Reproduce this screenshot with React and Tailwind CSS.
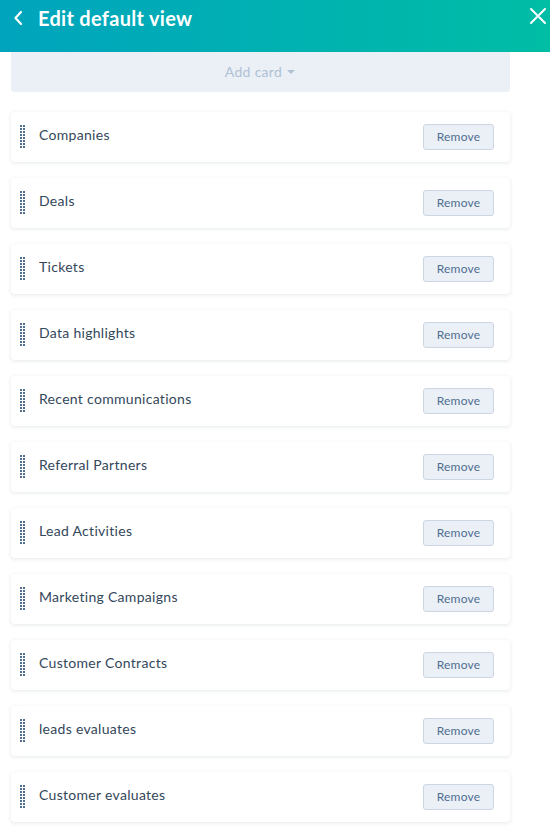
import React from "react";

const items = [
  "Companies",
  "Deals",
  "Tickets",
  "Data highlights",
  "Recent communications",
  "Referral Partners",
  "Lead Activities",
  "Marketing Campaigns",
  "Customer Contracts",
  "leads evaluates",
  "Customer evaluates",
];

function Handle() {
  const dots = Array.from({ length: 8 });
  return (
    <div className="grid grid-cols-2 gap-x-px gap-y-px w-[5px]">
      {dots.map((_, i) => (
        <React.Fragment key={i}>
          <div className="w-[2px] h-[2px] bg-[#516f90]" />
          <div className="w-[2px] h-[2px] bg-[#516f90]" />
        </React.Fragment>
      ))}
    </div>
  );
}

export default function App() {
  return (
    <div className="w-[550px] h-[827px] bg-white overflow-hidden" style={{ fontFamily: "Lato, 'Open Sans', sans-serif" }}>
      <div className="h-[52px] bg-gradient-to-r from-[#00a4bd] to-[#00bda5] flex items-start relative">
        <div className="flex items-center h-[35px] pl-[13px]">
          <svg width="11" height="16" viewBox="0 0 11 16" className="mr-[14px]">
            <path d="M8 2 L2.5 8 L8 14" stroke="white" strokeWidth="2.2" fill="none" strokeLinecap="round" strokeLinejoin="round" />
          </svg>
          <span className="text-white font-bold text-[20px] leading-none tracking-[0.3px]">Edit default view</span>
        </div>
        <svg width="18" height="18" viewBox="0 0 18 18" className="absolute right-[3px] top-[7px]">
          <path d="M2 2 L16 16 M16 2 L2 16" stroke="white" strokeWidth="2" strokeLinecap="round" />
        </svg>
      </div>
      <div className="px-[11px] w-[521px]">
        <div className="h-[40px] bg-[#eaf0f6] rounded-b-[3px] flex items-center justify-center text-[#b0c1d4] text-[14px] tracking-[0.3px]">
          <span className="-mt-[2px]">Add card</span>
          <svg width="10" height="6" viewBox="0 0 10 6" className="ml-[4px]">
            <path d="M1 1 L5 5 L9 1 Z" fill="#b0c1d4" />
          </svg>
        </div>
        <div className="flex flex-col gap-[16px] mt-[20px]">
          {items.map((t) => (
            <div key={t} className="h-[50px] bg-white rounded-[4px] shadow-[0_1px_4px_rgba(45,62,80,0.12)] flex items-center pl-[9px] pr-[16px]">
              <div className="-mt-[2px]"><Handle /></div>
              <span className="ml-[14px] text-[14px] text-[#33475b] -mt-[5px] tracking-[0.3px]">{t}</span>
              <button className="ml-auto w-[71px] h-[26px] bg-[#eaf0f6] border border-[#cbd6e2] rounded-[3px] text-[12px] text-[#506e91] flex items-center justify-center tracking-[0.2px]">
                Remove
              </button>
            </div>
          ))}
        </div>
      </div>
    </div>
  );
}
